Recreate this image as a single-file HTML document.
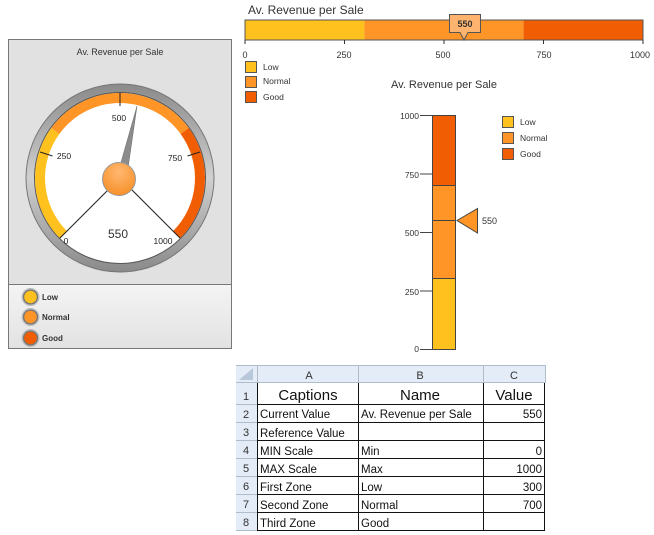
<!DOCTYPE html><html><head><style>body{margin:0;background:#fff}svg{display:block;font-family:"Liberation Sans",sans-serif}</style></head><body>
<svg width="654" height="535" viewBox="0 0 654 535">
<defs>
<linearGradient id="ring" x1="0" y1="0" x2="0" y2="1"><stop offset="0" stop-color="#8a8a8a"/><stop offset="0.5" stop-color="#d0d0d0"/><stop offset="1" stop-color="#8a8a8a"/></linearGradient>
<radialGradient id="hub" cx="0.5" cy="0.3" r="0.7"><stop offset="0" stop-color="#ffb870"/><stop offset="1" stop-color="#f7902a"/></radialGradient>
<linearGradient id="leg" x1="0" y1="0" x2="0" y2="1"><stop offset="0" stop-color="#f4f4f4"/><stop offset="1" stop-color="#e2e2e2"/></linearGradient>
</defs>
<text x="248" y="14" font-size="12" fill="#333">Av. Revenue per Sale</text>
<rect x="245" y="20" width="119.4" height="20" fill="#FEC11E"/>
<rect x="364.4" y="20" width="159.2" height="20" fill="#FE9526"/>
<rect x="523.6" y="20" width="119.4" height="20" fill="#F05D02"/>
<rect x="245" y="20" width="398" height="20" fill="none" stroke="#555"/>
<g stroke="#333"><line x1="245" y1="40" x2="245" y2="44"/><line x1="344.5" y1="40" x2="344.5" y2="44"/><line x1="444" y1="40" x2="444" y2="44"/><line x1="543.5" y1="40" x2="543.5" y2="44"/><line x1="643" y1="40" x2="643" y2="44"/></g>
<g font-size="9" fill="#333" text-anchor="middle"><text x="245" y="58">0</text><text x="344" y="58">250</text><text x="443" y="58">500</text><text x="544" y="58">750</text><text x="640" y="58">1000</text></g>
<path d="M449.5 14.5H480.5V32.5H468L464 40L460 32.5H449.5Z" fill="#FEB46E" stroke="#555"/>
<text x="465" y="27" font-size="9" fill="#333" text-anchor="middle" font-weight="bold">550</text>
<rect x="245.5" y="61.5" width="11" height="11" fill="#FEC11E" stroke="#555"/>
<rect x="245.5" y="76.5" width="11" height="11" fill="#FE9526" stroke="#555"/>
<rect x="245.5" y="91.5" width="11" height="11" fill="#F05D02" stroke="#555"/>
<g font-size="8.5" fill="#333"><text x="263" y="70">Low</text><text x="263" y="84">Normal</text><text x="263" y="100">Good</text></g>
<text x="444" y="88" font-size="11" fill="#333" text-anchor="middle">Av. Revenue per Sale</text>
<rect x="432" y="115" width="24" height="70.2" fill="#F05D02"/>
<rect x="432" y="185.2" width="24" height="93.6" fill="#FE9526"/>
<rect x="432" y="278.8" width="24" height="70.2" fill="#FEC11E"/>
<g stroke="#444"><rect x="432.5" y="115.5" width="23" height="234" fill="none"/><line x1="432" y1="185.5" x2="456" y2="185.5"/><line x1="432" y1="278.5" x2="456" y2="278.5"/><line x1="432" y1="220.5" x2="456" y2="220.5"/>
<line x1="420" y1="115.5" x2="432" y2="115.5"/><line x1="420" y1="174" x2="432" y2="174"/><line x1="420" y1="232.5" x2="432" y2="232.5"/><line x1="420" y1="291" x2="432" y2="291"/><line x1="420" y1="349.5" x2="432" y2="349.5"/></g>
<g font-size="8.5" fill="#333" text-anchor="end"><text x="419" y="119">1000</text><text x="419" y="178">750</text><text x="419" y="236">500</text><text x="419" y="295">250</text><text x="419" y="352">0</text></g>
<path d="M457 220.5L477.5 208.5V233Z" fill="#FE9526" stroke="#444"/>
<text x="482" y="224" font-size="9" fill="#333">550</text>
<rect x="502.5" y="116.5" width="11" height="11" fill="#FEC11E" stroke="#555"/>
<rect x="502.5" y="132.5" width="11" height="11" fill="#FE9526" stroke="#555"/>
<rect x="502.5" y="148.5" width="11" height="11" fill="#F05D02" stroke="#555"/>
<g font-size="8.5" fill="#333"><text x="520" y="125">Low</text><text x="520" y="141">Normal</text><text x="520" y="157">Good</text></g>
<rect x="8.5" y="39.5" width="223" height="245" fill="#e1e1e1" stroke="#777"/>
<rect x="8.5" y="284.5" width="223" height="64" fill="url(#leg)" stroke="#777"/>
<text x="120" y="55" font-size="9" fill="#333" text-anchor="middle">Av. Revenue per Sale</text>
<circle cx="120" cy="178" r="94" fill="url(#ring)" stroke="#777"/>
<circle cx="120" cy="178" r="85.5" fill="#fff" stroke="#555"/>
<g fill="none" stroke-width="10">
<path d="M63.4 234.6A80 80 0 0 1 55.3 131" stroke="#FEC11E"/>
<path d="M55.3 131A80 80 0 0 1 184.7 131" stroke="#FE9526"/>
<path d="M184.7 131A80 80 0 0 1 176.6 234.6" stroke="#F05D02"/>
</g>
<g stroke="#222" stroke-width="1">
<line x1="120" y1="93" x2="120" y2="106"/>
<line x1="40.1" y1="152" x2="52.5" y2="156"/>
<line x1="199.9" y1="152" x2="187.5" y2="156"/>
<line x1="119" y1="179" x2="59.9" y2="238.1"/>
<line x1="121" y1="179" x2="180.1" y2="238.1"/>
</g>
<g font-size="8.5" fill="#222" text-anchor="middle"><text x="119" y="121">500</text><text x="64" y="159">250</text><text x="175" y="161">750</text><text x="66" y="244">0</text><text x="163" y="244">1000</text></g>
<text x="118" y="238" font-size="12" fill="#333" text-anchor="middle">550</text>
<path d="M116 180L137 106L126 182Z" fill="#8c8c8c" stroke="#666" stroke-width="0.5"/>
<circle cx="119" cy="179" r="16.5" fill="url(#hub)" stroke="#999"/>
<g stroke="#777" stroke-width="1.5"><circle cx="30.5" cy="297" r="7" fill="#FEC11E"/><circle cx="30.5" cy="317" r="7" fill="#FE9526"/><circle cx="30.5" cy="338" r="7" fill="#F05D02"/></g>
<g fill="none" stroke="#bbb"><circle cx="30.5" cy="297" r="8.5"/><circle cx="30.5" cy="317" r="8.5"/><circle cx="30.5" cy="338" r="8.5"/></g>
<g font-size="8" fill="#333" font-weight="bold"><text x="42" y="300">Low</text><text x="42" y="320">Normal</text><text x="42" y="341">Good</text></g>
<rect x="236" y="365" width="309" height="18" fill="#e4ecf7"/>
<rect x="236" y="383" width="21" height="148" fill="#e4ecf7"/>
<path d="M239 380L253 380L253 368Z" fill="#b9c7da"/>
<g stroke="#b0bccc"><line x1="236" y1="365.5" x2="545" y2="365.5"/><line x1="236" y1="382.5" x2="545" y2="382.5"/>
<line x1="257.5" y1="365" x2="257.5" y2="383"/><line x1="358.5" y1="365" x2="358.5" y2="383"/><line x1="483.5" y1="365" x2="483.5" y2="383"/><line x1="545.5" y1="365" x2="545.5" y2="383"/>
<line x1="236" y1="404.5" x2="257" y2="404.5"/><line x1="236" y1="422.5" x2="257" y2="422.5"/><line x1="236" y1="440.5" x2="257" y2="440.5"/><line x1="236" y1="458.5" x2="257" y2="458.5"/><line x1="236" y1="476.5" x2="257" y2="476.5"/><line x1="236" y1="494.5" x2="257" y2="494.5"/><line x1="236" y1="512.5" x2="257" y2="512.5"/><line x1="236" y1="530.5" x2="257" y2="530.5"/></g>
<g stroke="#111"><line x1="257" y1="404.5" x2="545" y2="404.5"/><line x1="257" y1="422.5" x2="545" y2="422.5"/><line x1="257" y1="440.5" x2="545" y2="440.5"/><line x1="257" y1="458.5" x2="545" y2="458.5"/><line x1="257" y1="476.5" x2="545" y2="476.5"/><line x1="257" y1="494.5" x2="545" y2="494.5"/><line x1="257" y1="512.5" x2="545" y2="512.5"/><line x1="257" y1="530.5" x2="545" y2="530.5"/>
<line x1="257.5" y1="383" x2="257.5" y2="531"/><line x1="358.5" y1="383" x2="358.5" y2="531"/><line x1="483.5" y1="383" x2="483.5" y2="531"/><line x1="544.5" y1="383" x2="544.5" y2="531"/></g>
<g font-size="11" fill="#333" text-anchor="middle"><text x="309" y="379">A</text><text x="420" y="379">B</text><text x="514" y="379">C</text>
<text x="246" y="400">1</text><text x="246" y="418">2</text><text x="246" y="436">3</text><text x="246" y="454">4</text><text x="246" y="472">5</text><text x="246" y="490">6</text><text x="246" y="508">7</text><text x="246" y="526">8</text></g>
<g font-size="15" fill="#111" text-anchor="middle"><text x="308" y="400">Captions</text><text x="420" y="400">Name</text><text x="514" y="400">Value</text></g>
<g font-size="11.5" fill="#111"><text x="260" y="418">Current Value</text><text x="260" y="437">Reference Value</text><text x="260" y="455">MIN Scale</text><text x="260" y="473">MAX Scale</text><text x="260" y="491">First Zone</text><text x="260" y="509">Second Zone</text><text x="260" y="527">Third Zone</text>
<text x="361" y="418">Av. Revenue per Sale</text><text x="361" y="455">Min</text><text x="361" y="473">Max</text><text x="361" y="491">Low</text><text x="361" y="509">Normal</text><text x="361" y="527">Good</text></g>
<g font-size="11.5" fill="#111" text-anchor="end"><text x="542" y="418">550</text><text x="542" y="455">0</text><text x="542" y="473">1000</text><text x="542" y="491">300</text><text x="542" y="509">700</text></g>
</svg>
</body></html>
